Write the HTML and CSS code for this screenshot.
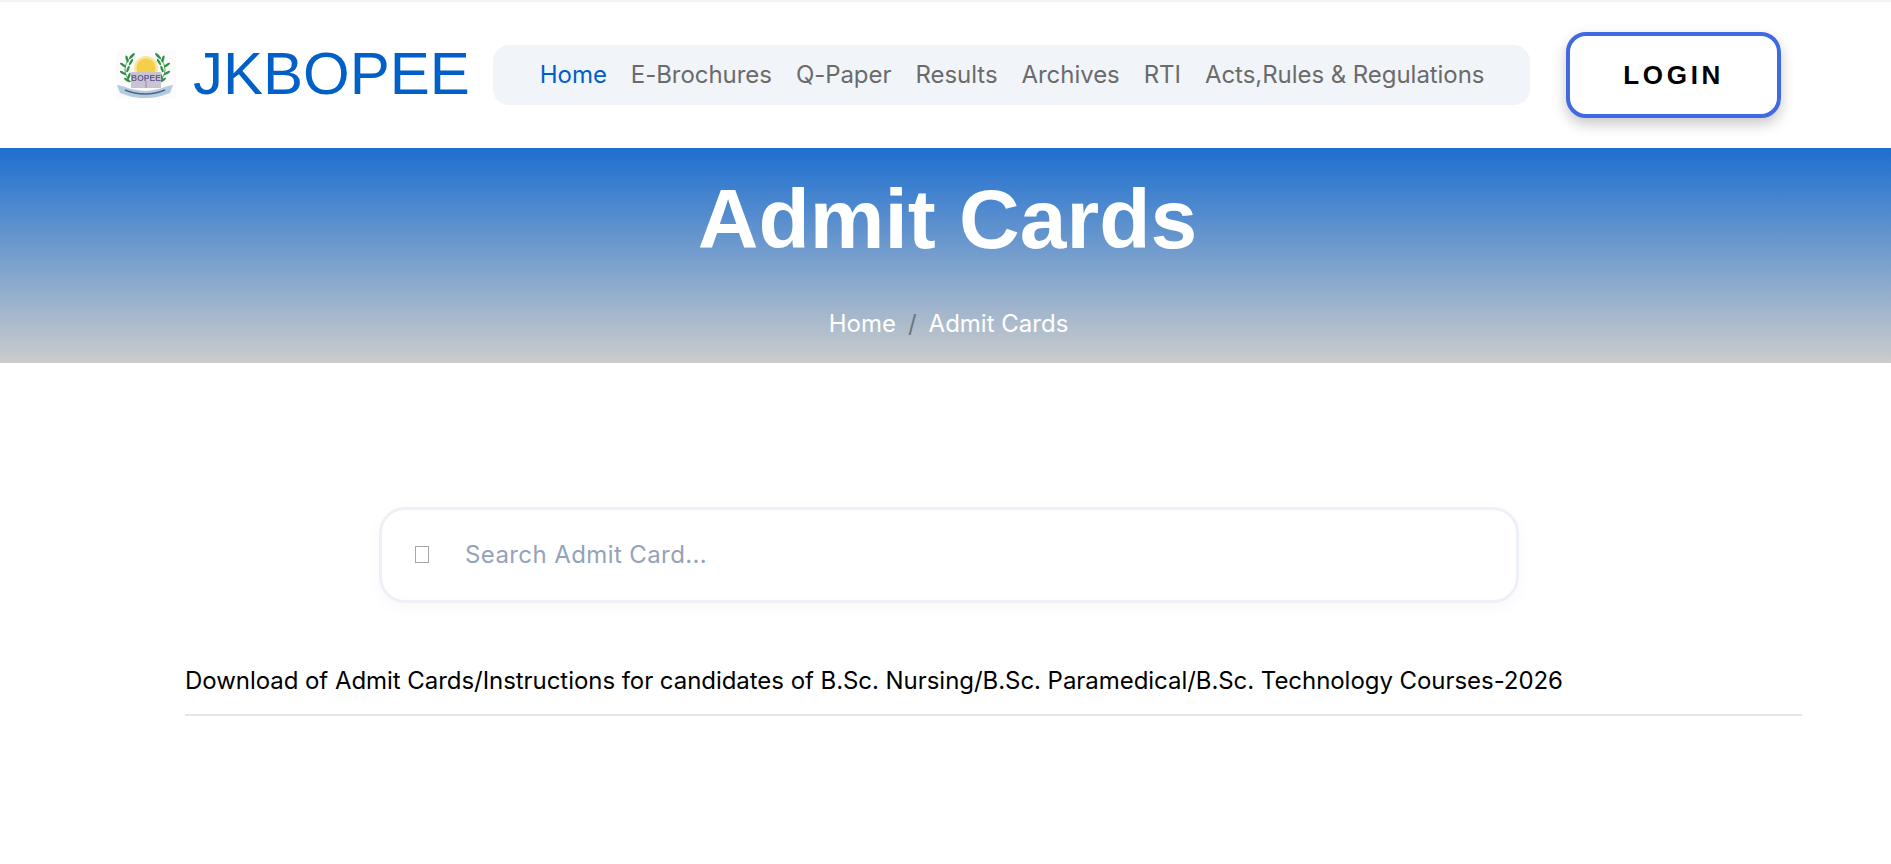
FILE: index.html
```html
<!DOCTYPE html>
<html lang="en">
<head>
<meta charset="utf-8">
<title>Admit Cards - JKBOPEE</title>
<link rel="stylesheet" href="styles.css">
</head>
<body>
<header class="site-header">
  <a class="brand" href="#">
    <svg class="brand-logo" viewBox="0 0 60 48" aria-hidden="true">
      <rect width="60" height="48" fill="#fbfbfb"/>
      <circle cx="30" cy="17" r="12" fill="#f8e69a"/>
      <circle cx="30" cy="17" r="9.500" fill="#f6cf4a"/>
      <g id="laurel" transform="translate(2 0)">
        <path d="M16 3C9 9 5 16 8 24c2 4 4 7 8 9" fill="none" stroke="#4a9e58" stroke-width="1"/>
        <g fill="#2f9145">
          <ellipse cx="14" cy="5" rx="3.800" ry="1.300" transform="rotate(-45 14 5)"/>
          <ellipse cx="9" cy="8" rx="1.300" ry="3.500" transform="rotate(-15 9 8)"/>
          <ellipse cx="13" cy="11" rx="3.500" ry="1.200" transform="rotate(-60 13 11)"/>
          <ellipse cx="5" cy="14" rx="3.500" ry="1.200" transform="rotate(35 5 14)"/>
          <ellipse cx="10" cy="18" rx="3.500" ry="1.200" transform="rotate(-70 10 18)"/>
          <ellipse cx="5" cy="22" rx="3.500" ry="1.200" transform="rotate(30 5 22)"/>
          <ellipse cx="11" cy="25" rx="3.500" ry="1.200" transform="rotate(-70 11 25)"/>
          <ellipse cx="9" cy="29" rx="3.500" ry="1.200" transform="rotate(35 9 29)"/>
        </g>
      </g>
      <use href="#laurel" transform="translate(58 0) scale(-1 1)"/>
      <rect x="15" y="21" width="30" height="16" fill="#c8c4d2"/>
      <path d="M30 30v7" stroke="#8f8aa6" stroke-width="1"/>
      <text class="brand-logo-text" x="30" y="29.500" text-anchor="middle">BOPEE</text>
      <path d="M1 34c8 1 12 5 28 6 16-1 20-5 28-6l-3 8c-8 3-15 5-25 5S12 45 4 42z" fill="#b3cadf"/>
      <path d="M9 39c7 3 12 4 20 4s13-1 20-4" fill="none" stroke="#4f6288" stroke-width="1.500"/>
    </svg>
    <span class="brand-name">JKBOPEE</span>
  </a>
  <nav class="main-nav">
    <a class="nav-link is-active" href="#">Home</a>
    <a class="nav-link" href="#">E-Brochures</a>
    <a class="nav-link" href="#">Q-Paper</a>
    <a class="nav-link" href="#">Results</a>
    <a class="nav-link" href="#">Archives</a>
    <a class="nav-link" href="#">RTI</a>
    <a class="nav-link" href="#">Acts,Rules &amp; Regulations</a>
  </nav>
  <a class="login-btn" href="#">LOGIN</a>
</header>
<section class="hero">
  <h1 class="hero-title">Admit Cards</h1>
  <div class="breadcrumb">
    <a href="#">Home</a>
    <span class="crumb-sep">/</span>
    <span>Admit Cards</span>
  </div>
</section>
<main class="content">
  <div class="search-box">
    <span class="search-icon"></span>
    <span class="search-placeholder">Search Admit Card...</span>
  </div>
  <ul class="card-list">
    <li class="card-item">Download of Admit Cards/Instructions for candidates of B.Sc. Nursing/B.Sc. Paramedical/B.Sc. Technology Courses-2026</li>
  </ul>
</main>
</body>
</html>
```

FILE: styles.css
```css
* { box-sizing: border-box; }
html, body { margin: 0; padding: 0; }
body {
  background: #fff;
  font-family: Inter, "Liberation Sans", sans-serif;
  overflow: hidden;
  height: 864px;
}
a { text-decoration: none; color: inherit; }

.site-header {
  height: 148px;
  border-top: 2px solid #f1f5f9;
  padding: 0 110px 0 116px;
  display: flex;
  align-items: center;
  background: #fff;
}
.brand { display: flex; align-items: center; gap: 17px; margin-right: 23px; }
.brand-logo { width: 60px; height: 48px; display: block; filter: blur(0.5px); }
.brand-logo-text { font: 700 8.500px "Liberation Sans", sans-serif; fill: #6a5f94; }
.brand-name {
  font-family: "Liberation Sans", Arial, sans-serif;
  font-size: 60px;
  line-height: 72px;
  color: #0060c7;
  margin-top: -2px;
}
.main-nav {
  width: 1039px;
  height: 60px;
  background: #f1f5f9;
  border-radius: 16px;
  display: flex;
  align-items: center;
  gap: 24px;
  padding-left: 47px;
  padding-bottom: 1px;
  font-size: 24px;
  letter-spacing: -0.05px;
  color: #6b6b6b;
}
.nav-link.is-active { color: #0060c7; }
.login-btn {
  margin-left: 36px;
  width: 215px;
  height: 86px;
  border: 4px solid #4169e1;
  border-radius: 20px;
  display: flex;
  align-items: center;
  justify-content: center;
  font-family: "Liberation Sans", Arial, sans-serif;
  font-weight: 700;
  font-size: 26px;
  letter-spacing: 3.700px;
  color: #000;
  background: #fff;
  box-shadow: 0 6px 14px rgba(0, 0, 0, 0.22);
}

.hero {
  height: 215px;
  background: linear-gradient(180deg, #1e6fcf 0%, #cccccc 100%);
  text-align: center;
  color: #fff;
  padding-top: 23px;
}
.hero-title {
  margin: 0;
  font-family: "Liberation Sans", Arial, sans-serif;
  font-weight: 700;
  font-size: 84px;
  line-height: 96px;
  padding-left: 4px;
}
.breadcrumb {
  margin-top: 39px;
  display: flex;
  justify-content: center;
  gap: 12px;
  font-size: 24px;
  line-height: 36px;
  padding-left: 6px;
}
.crumb-sep { color: #6c757d; }

.content { padding: 144px 89px 0 185px; }
.search-box {
  width: 1140px;
  height: 96px;
  margin-left: 194px;
  border: 3px solid #edf1f7;
  border-radius: 26px;
  background: #fff;
  box-shadow: 0 4px 18px rgba(0, 0, 0, 0.03);
  display: flex;
  align-items: center;
  padding-left: 33px;
  padding-bottom: 2px;
}
.search-icon {
  width: 14px;
  height: 17px;
  border: 1px solid #a6a6ad;
  margin-right: 36px;
  flex: none;
}
.search-placeholder { font-size: 24px; letter-spacing: 0.4px; color: #94a3b8; }
.card-list { list-style: none; margin: 54px 0 0; padding: 0; }
.card-item {
  font-size: 24px;
  line-height: 36px;
  letter-spacing: -0.05px;
  color: #000;
  padding: 6px 0 15px;
  border-bottom: 2px solid #e4e6e9;
}
```
